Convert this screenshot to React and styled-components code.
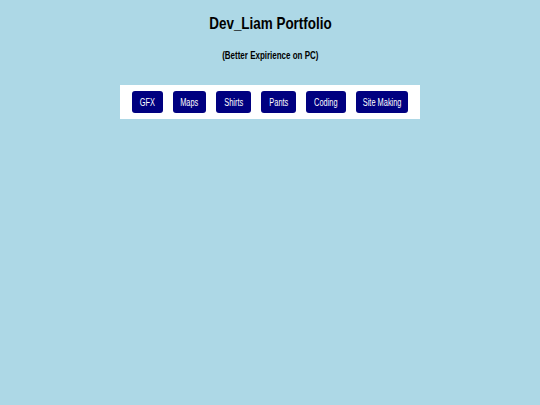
import React from "react";
import styled, { createGlobalStyle } from "styled-components";

const Global = createGlobalStyle`
  html, body { margin: 0; padding: 0; background: #add8e6; }
  body { font-family: "Liberation Sans", Arial, sans-serif; }
`;

const Page = styled.div`
  display: flex;
  flex-direction: column;
  align-items: center;
  padding-top: 13px;
  min-height: 405px;
  box-sizing: border-box;
`;

const Narrow = styled.span`
  display: inline-block;
  white-space: nowrap;
  transform: scaleX(${(p) => p.$s || 0.74});
  transform-origin: center;
`;

const Title = styled.h1`
  margin: 0;
  font-size: 17px;
  font-weight: bold;
  color: #000;
  line-height: 22px;
`;

const Subtitle = styled.h3`
  margin: 13.5px 0 0;
  font-size: 10.5px;
  font-weight: bold;
  color: #000;
  line-height: 13px;
`;

const Nav = styled.nav`
  margin-top: 23.5px;
  width: 300px;
  height: 34px;
  background: #fff;
  display: flex;
  align-items: center;
  justify-content: center;
  gap: 10px;
`;

const Button = styled.button`
  width: ${(p) => p.$w}px;
  height: 22px;
  padding: 0;
  display: flex;
  align-items: center;
  justify-content: center;
  background: #000080;
  color: #fff;
  border: none;
  border-radius: 3px;
  font-family: inherit;
  font-size: 10px;
  cursor: pointer;
`;

const items = [
  ["GFX", 31],
  ["Maps", 33],
  ["Shirts", 35],
  ["Pants", 35],
  ["Coding", 40],
  ["Site Making", 52],
];

export default function App() {
  return (
    <>
      <Global />
      <Page>
        <Title>
          <Narrow $s={0.79}>Dev_Liam Portfolio</Narrow>
        </Title>
        <Subtitle>
          <Narrow $s={0.76}>(Better Expirience on PC)</Narrow>
        </Subtitle>
        <Nav>
          {items.map(([t, w]) => (
            <Button key={t} $w={w}>
              <Narrow>{t}</Narrow>
            </Button>
          ))}
        </Nav>
      </Page>
    </>
  );
}
